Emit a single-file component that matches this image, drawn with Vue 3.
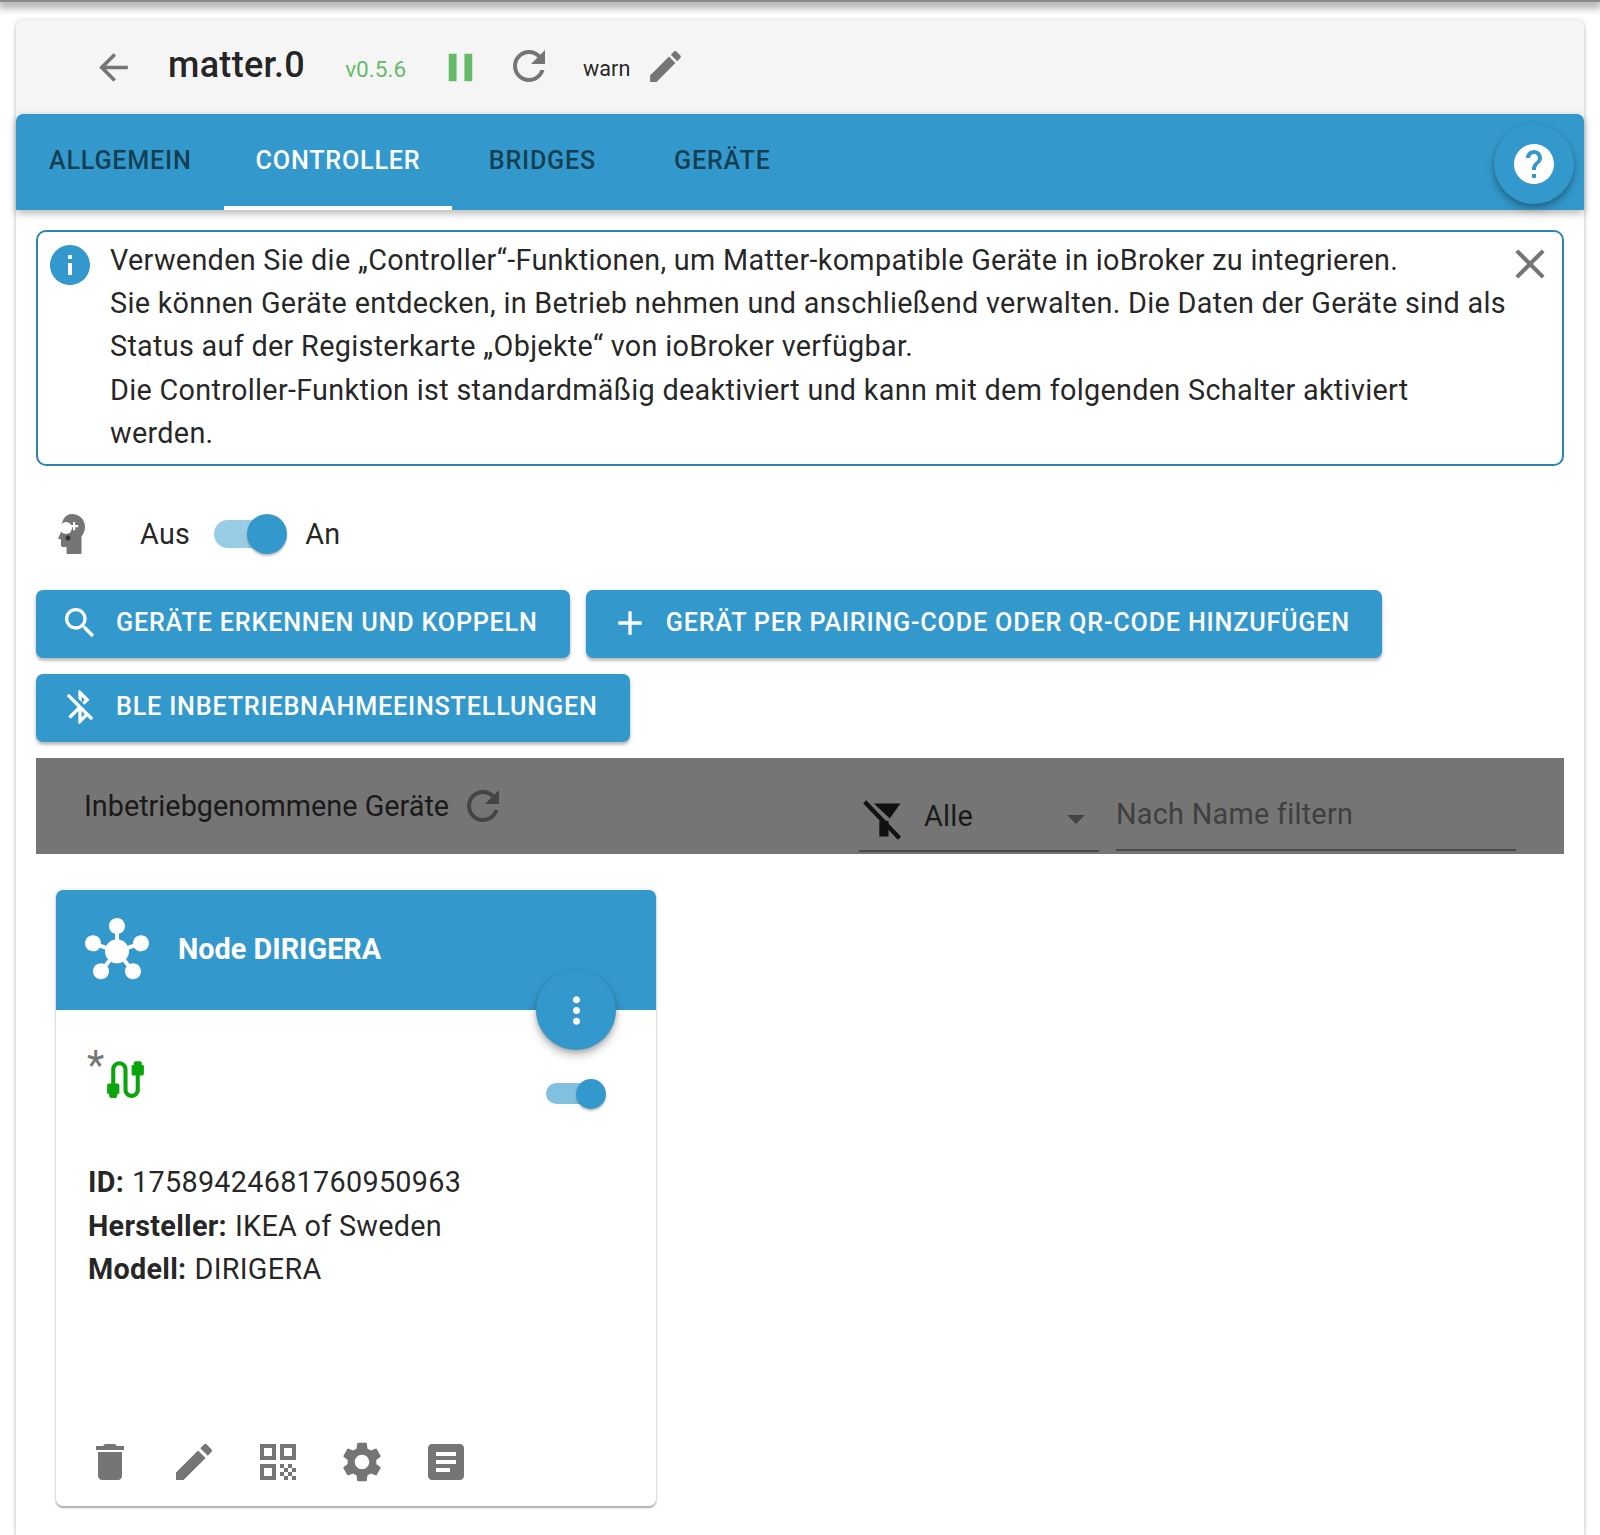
<template>
  <div class="top-bar"></div>
  <main class="panel">
    <header class="head">
      <svg class="icon back" viewBox="0 0 24 24"><path :d="icons.back" /></svg>
      <h1 class="title">matter.0</h1>
      <span class="version">v0.5.6</span>
      <svg class="icon pause" viewBox="0 0 24 24"><path :d="icons.pause" /></svg>
      <svg class="icon reload" viewBox="0 0 24 24"><path :d="icons.refresh" /></svg>
      <span class="level">warn</span>
      <svg class="icon edit" viewBox="0 0 24 24"><path :d="icons.edit" /></svg>
    </header>

    <nav class="tabs">
      <div
        v-for="tab in tabs"
        :key="tab"
        class="tab"
        :class="{ active: tab === 'Controller' }"
      >{{ tab }}</div>
      <button class="fab help-fab">
        <svg viewBox="0 0 24 24"><path :d="icons.help" /></svg>
      </button>
    </nav>

    <section class="content">
      <div class="notice">
        <svg class="notice-icon" viewBox="0 0 24 24"><path :d="icons.info" /></svg>
        <p class="notice-text">
          Verwenden Sie die „Controller“-Funktionen, um Matter-kompatible Geräte in ioBroker zu integrieren.<br />
          Sie können Geräte entdecken, in Betrieb nehmen und anschließend verwalten. Die Daten der Geräte sind als Status auf der Registerkarte „Objekte“ von ioBroker verfügbar.<br />
          Die Controller-Funktion ist standardmäßig deaktiviert und kann mit dem folgenden Schalter aktiviert werden.
        </p>
        <svg class="notice-close" viewBox="0 0 24 24"><path :d="icons.close" /></svg>
      </div>

      <div class="switch-row">
        <svg class="head-icon" viewBox="0 0 27 40">
          <path class="head-shape" d="M14 0c7.5 0 13 5.5 13 13 0 4-1.600 7-3.500 9.500V39c0 .6-.4 1-1 1H9.500c-.6 0-1-.4-1-1v-6H5c-1.200 0-2-.8-2-2v-5.500L0 24.500l3-6.500C3 7 6.500 0 14 0z" />
          <circle class="head-hole" cx="8" cy="14" r="6" />
          <path class="head-hole" d="M15 8h2.200v3h3v2.200h-3v3H15v-3h-3V11h3z" />
          <circle class="head-dot" cx="10" cy="24" r="2.500" />
        </svg>
        <span class="switch-label off">Aus</span>
        <span class="switch big"><i></i></span>
        <span class="switch-label">An</span>
      </div>

      <div class="actions">
        <button v-for="action in actions" :key="action.label" class="action">
          <svg viewBox="0 0 24 24"><path :d="action.icon" /></svg>
          {{ action.label }}
        </button>
      </div>

      <div class="devices-bar">
        <div class="devices-title">
          <span>Inbetriebgenommene Geräte</span>
          <svg class="icon" viewBox="0 0 24 24"><path :d="icons.refresh" /></svg>
        </div>
        <div class="devices-select">
          <svg class="filter-icon" viewBox="0 0 24 24">
            <path d="M7 3h14.500l-5.800 8.200L7 3z" />
            <path d="M10 12.500h5V21h-5z" />
            <path class="slash" d="M2 2l19 20" />
          </svg>
          <span class="select-value">Alle</span>
          <span class="select-arrow"></span>
        </div>
        <input class="devices-filter" placeholder="Nach Name filtern" />
      </div>

      <article class="node">
        <div class="node-head">
          <svg class="hub" viewBox="0 0 24 24"><path :d="icons.hub" /></svg>
          <span class="node-name">Node DIRIGERA</span>
          <button class="fab node-fab">
            <svg viewBox="0 0 24 24"><path :d="icons.more" /></svg>
          </button>
        </div>
        <div class="node-status">
          <div class="connection">
            <span class="star">*</span>
            <svg class="cable" viewBox="0 0 24 24"><path :d="icons.cable" /></svg>
          </div>
          <span class="switch small"><i></i></span>
        </div>
        <dl class="node-info">
          <div v-for="row in nodeInfo" :key="row.label">
            <dt>{{ row.label }}:</dt>
            <dd>{{ row.value }}</dd>
          </div>
        </dl>
        <div class="node-tools">
          <span v-for="tool in nodeTools" :key="tool" class="tool">
            <svg viewBox="0 0 24 24"><path :d="tool" /></svg>
          </span>
        </div>
      </article>
    </section>
  </main>
</template>

<script setup>
const icons = {
  back: 'M20 11H7.83l5.59-5.59L12 4l-8 8 8 8 1.41-1.41L7.83 13H20v-2z',
  pause: 'M6 19h4V5H6v14zm8-14v14h4V5h-4z',
  refresh: 'M17.65 6.35C16.2 4.9 14.21 4 12 4c-4.42 0-7.99 3.58-7.99 8s3.57 8 7.99 8c3.73 0 6.84-2.55 7.73-6h-2.08c-.82 2.33-3.04 4-5.65 4-3.31 0-6-2.69-6-6s2.69-6 6-6c1.66 0 3.14.69 4.22 1.78L13 11h7V4l-2.35 2.35z',
  edit: 'M3 17.25V21h3.75L17.81 9.94l-3.75-3.75L3 17.25zM20.71 7.04c.39-.39.39-1.02 0-1.41l-2.34-2.34a.9959.9959 0 0 0-1.41 0l-1.83 1.83 3.75 3.75 1.83-1.83z',
  help: 'M12 2C6.48 2 2 6.48 2 12s4.48 10 10 10 10-4.48 10-10S17.52 2 12 2zm1 17h-2v-2h2v2zm2.07-7.75l-.9.92C13.45 12.9 13 13.5 13 15h-2v-.5c0-1.1.45-2.1 1.17-2.83l1.24-1.26c.37-.36.59-.86.59-1.41 0-1.1-.9-2-2-2s-2 .9-2 2H8c0-2.21 1.79-4 4-4s4 1.79 4 4c0 .88-.36 1.68-.93 2.25z',
  info: 'M12 2C6.48 2 2 6.48 2 12s4.48 10 10 10 10-4.48 10-10S17.52 2 12 2zm1 15h-2v-6h2v6zm0-8h-2V7h2v2z',
  close: 'M19 6.41 17.59 5 12 10.59 6.41 5 5 6.41 10.59 12 5 17.59 6.41 19 12 13.41 17.59 19 19 17.59 13.41 12z',
  more: 'M12 8c1.1 0 2-.9 2-2s-.9-2-2-2-2 .9-2 2 .9 2 2 2zm0 2c-1.1 0-2 .9-2 2s.9 2 2 2 2-.9 2-2-.9-2-2-2zm0 6c-1.1 0-2 .9-2 2s.9 2 2 2 2-.9 2-2-.9-2-2-2z',
  hub: 'M8.4 18.2c.38.5.6 1.12.6 1.8 0 1.66-1.34 3-3 3s-3-1.34-3-3 1.34-3 3-3c.44 0 .85.09 1.23.26l1.41-1.77c-.92-1.03-1.29-2.39-1.09-3.69l-2.03-.68c-.54.83-1.46 1.38-2.52 1.38-1.66 0-3-1.34-3-3s1.34-3 3-3 3 1.34 3 3c0 .07 0 .14-.01.21l2.03.68c.64-1.21 1.82-2.09 3.22-2.32V5.91C9.96 5.57 9 4.4 9 3c0-1.66 1.34-3 3-3s3 1.34 3 3c0 1.4-.96 2.57-2.25 2.91v2.16c1.4.23 2.58 1.11 3.22 2.32l2.03-.68C18 9.64 18 9.57 18 9.5c0-1.66 1.34-3 3-3s3 1.34 3 3-1.34 3-3 3c-1.06 0-1.98-.55-2.52-1.37l-2.03.68c.2 1.29-.16 2.65-1.09 3.69l1.41 1.77c.38-.17.79-.26 1.23-.26 1.66 0 3 1.34 3 3s-1.34 3-3 3-3-1.34-3-3c0-.68.22-1.3.6-1.8l-1.41-1.77c-1.35.75-3.01.76-4.37 0L8.4 18.2z',
  cable: 'M20 5V4c0-.55-.45-1-1-1h-2c-.55 0-1 .45-1 1v1h-1v4c0 .55.45 1 1 1h1v7c0 1.1-.9 2-2 2s-2-.9-2-2V7c0-2.21-1.79-4-4-4S5 4.79 5 7v7H4c-.55 0-1 .45-1 1v4h1v1c0 .55.45 1 1 1h2c.55 0 1-.45 1-1v-1h1v-4c0-.55-.45-1-1-1H7V7c0-1.1.9-2 2-2s2 .9 2 2v10c0 2.21 1.79 4 4 4s4-1.79 4-4v-7h1c.55 0 1-.45 1-1V5h-1z',
}

const tabs = ['Allgemein', 'Controller', 'Bridges', 'Geräte']

const actions = [
  {
    label: 'Geräte erkennen und koppeln',
    icon: 'M15.5 14h-.79l-.28-.27C15.41 12.59 16 11.11 16 9.5 16 5.91 13.09 3 9.5 3S3 5.91 3 9.5 5.91 16 9.5 16c1.61 0 3.09-.59 4.23-1.57l.27.28v.79l5 4.99L20.49 19l-4.99-5zm-6 0C7.01 14 5 11.99 5 9.5S7.01 5 9.5 5 14 7.01 14 9.5 11.99 14 9.5 14z',
  },
  {
    label: 'Gerät per Pairing-Code oder QR-Code hinzufügen',
    icon: 'M19 13h-6v6h-2v-6H5v-2h6V5h2v6h6v2z',
  },
  {
    label: 'BLE Inbetriebnahmeeinstellungen',
    icon: 'M13 5.83l1.88 1.88-1.6 1.6 1.41 1.41 3.02-3.02L12 2h-1v5.03l2 2v-3.2zM5.41 4L4 5.41 10.59 12 5 17.59 6.41 19 11 14.41V22h1l4.29-4.29 2.3 2.29L20 18.59 5.41 4zM13 18.17v-3.76l1.88 1.88L13 18.17z',
  },
]

const nodeInfo = [
  { label: 'ID', value: '17589424681760950963' },
  { label: 'Hersteller', value: 'IKEA of Sweden' },
  { label: 'Modell', value: 'DIRIGERA' },
]

const nodeTools = [
  'M6 19c0 1.1.9 2 2 2h8c1.1 0 2-.9 2-2V7H6v12zM19 4h-3.5l-1-1h-5l-1 1H5v2h14V4z',
  icons.edit,
  'M3 11h8V3H3v8zm2-6h4v4H5V5zM3 21h8v-8H3v8zm2-6h4v4H5v-4zM13 3v8h8V3h-8zm6 6h-4V5h4v4zM19 19h2v2h-2zM13 13h2v2h-2zM15 15h2v2h-2zM13 17h2v2h-2zM15 19h2v2h-2zM17 17h2v2h-2zM17 13h2v2h-2zM19 15h2v2h-2z',
  'M19.14 12.94c.04-.3.06-.61.06-.94 0-.32-.02-.64-.07-.94l2.03-1.58c.18-.14.23-.41.12-.61l-1.92-3.32c-.12-.22-.37-.29-.59-.22l-2.39.96c-.5-.38-1.03-.7-1.62-.94l-.36-2.54c-.04-.24-.24-.41-.48-.41h-3.84c-.24 0-.43.17-.47.41l-.36 2.54c-.59.24-1.13.57-1.62.94l-2.39-.96c-.22-.08-.47 0-.59.22L2.74 8.87c-.12.21-.08.47.12.61l2.03 1.58c-.05.3-.09.63-.09.94s.02.64.07.94l-2.03 1.58c-.18.14-.23.41-.12.61l1.92 3.32c.12.22.37.29.59.22l2.39-.96c.5.38 1.03.7 1.62.94l.36 2.54c.05.24.24.41.48.41h3.84c.24 0 .44-.17.47-.41l.36-2.54c.59-.24 1.13-.56 1.62-.94l2.39.96c.22.08.47 0 .59-.22l1.92-3.32c.12-.22.07-.47-.12-.61l-2.01-1.58zM12 15.6c-1.98 0-3.6-1.62-3.6-3.6s1.62-3.6 3.6-3.6 3.6 1.62 3.6 3.6-1.62 3.6-3.6 3.6z',
  'M19 3H5c-1.1 0-2 .9-2 2v14c0 1.1.9 2 2 2h14c1.1 0 2-.9 2-2V5c0-1.1-.9-2-2-2zm-5 14H7v-2h7v2zm3-4H7v-2h10v2zm0-4H7V7h10v2z',
]
</script>

<style>
html, body { background: #fff; overflow: hidden; }
</style>

<style scoped>
.top-bar {
  height: 2px;
  background: #8a8a8a;
  box-shadow: 0 2px 10px 2px rgba(0, 0, 0, 0.55);
}

.panel {
  margin: 18px 16px 0;
  height: 1515px;
  background: #fff;
  border-radius: 7px 7px 0 0;
  box-shadow: 0 1px 4px rgba(0, 0, 0, 0.3);
  font-family: Roboto, "Liberation Sans", sans-serif;
  color: rgba(0, 0, 0, 0.87);
}

.icon { fill: #757575; width: 43px; height: 43px; flex: none; }

/* Header */
.head {
  height: 94px;
  background: #f5f5f5;
  border-radius: 7px 7px 0 0;
  display: flex;
  align-items: center;
  padding-left: 76px;
}
.title { margin: -4px 0 0 33px; font-size: 36px; font-weight: 500; letter-spacing: 0.3px; }
.version { margin-left: 40px; font-size: 22.6px; color: #66bb6a; position: relative; top: 2px; }
.pause { margin-left: 31px; fill: #66bb6a; width: 47px; height: 47px; }
.reload { margin-left: 21px; width: 48px; height: 48px; margin-top: -3px; }
.level { margin-left: 30px; font-size: 21.6px; position: relative; top: 1px; }
.edit { margin-left: 15px; width: 41px; height: 41px; margin-top: -2px; }

/* Tabs */
.tabs {
  position: relative;
  z-index: 1;
  height: 96px;
  display: flex;
  padding-left: 1px;
  background: #3399cc;
  border-radius: 7px 7px 0 0;
  box-shadow: 0 3px 8px rgba(0, 0, 0, 0.3);
}
.tab {
  min-width: 180px;
  padding: 0 32px 4px;
  box-sizing: border-box;
  display: flex;
  align-items: center;
  justify-content: center;
  font-size: 25.2px;
  font-weight: 500;
  letter-spacing: 0.76px;
  text-transform: uppercase;
  color: rgba(0, 0, 0, 0.6);
}
.tab.active { color: #fff; border-bottom: 4px solid #fff; padding-bottom: 0; }

.fab {
  position: absolute;
  width: 80px;
  height: 80px;
  padding: 0;
  border: 0;
  border-radius: 50%;
  background: #3399cc;
  box-shadow: 0 5px 10px rgba(0, 0, 0, 0.25), 0 2px 4px rgba(0, 0, 0, 0.15);
  display: flex;
  align-items: center;
  justify-content: center;
}
.fab svg { fill: #fff; width: 48px; height: 48px; }
.help-fab { right: 10px; top: 10px; }

/* Content */
.content { padding: 20px 20px 0; }

.notice {
  height: 236px;
  box-sizing: border-box;
  border: 2px solid #2a85b0;
  border-radius: 10px;
  display: flex;
  align-items: flex-start;
  padding: 7px 14px 0 8px;
}
.notice-icon { fill: #3399cc; width: 48px; height: 48px; flex: none; margin-top: 2px; }
.notice-text {
  margin: 0 0 0 16px;
  width: 1398px;
  flex: none;
  font-size: 28.8px;
  line-height: 43.2px;
  letter-spacing: 0.3px;
}
.notice-close { fill: #757575; width: 50px; height: 50px; flex: none; margin: 0 0 0 -3px; }

.switch-row {
  height: 124px;
  display: flex;
  align-items: center;
  padding: 12px 0 0 22px;
  box-sizing: border-box;
  font-size: 28.8px;
  letter-spacing: 0.27px;
}
.head-icon { width: 27px; height: 40px; flex: none; }
.head-shape { fill: #757575; }
.head-hole { fill: #fff; }
.head-dot { fill: #333; }
.switch-label.off { margin-left: 55px; }
.switch {
  position: relative;
  display: block;
  flex: none;
  background: rgba(51, 153, 204, 0.5);
  border-radius: 14px;
}
.switch i {
  position: absolute;
  border-radius: 50%;
  background: #3399cc;
  box-shadow: 0 2px 2px rgba(0, 0, 0, 0.25);
}
.switch.big { width: 66px; height: 28px; margin: 0 25px 0 24px; }
.switch.big i { width: 40px; height: 40px; right: -7px; top: -6px; }
.switch.small { width: 50px; height: 21px; margin-right: 10px; background: rgba(51, 153, 204, 0.62); }
.switch.small i { width: 30px; height: 30px; right: -10px; top: -4.500px; }

.actions { display: flex; flex-wrap: wrap; gap: 16px; }
.action {
  height: 68px;
  padding: 0 32px 4px 25px;
  border: 0;
  border-radius: 7px;
  background: #3399cc;
  box-shadow: 0 3px 3px rgba(0, 0, 0, 0.2), 0 1px 5px rgba(0, 0, 0, 0.12);
  color: #fff;
  display: flex;
  align-items: center;
  gap: 15px;
  font-family: inherit;
  font-size: 25.2px;
  font-weight: 500;
  letter-spacing: 0.79px;
  text-transform: uppercase;
}
.action svg { fill: #fff; width: 40px; height: 40px; margin: 2px 1px 0 -1px; }

.devices-bar {
  margin-top: 16px;
  height: 96px;
  background: #757575;
  display: flex;
  align-items: flex-start;
  padding: 0 48px;
}
.devices-title {
  display: flex;
  align-items: center;
  gap: 10px;
  width: 775px;
  margin-top: 24px;
  font-size: 28.8px;
  color: #1a1a1a;
}
.devices-title .icon { fill: #444; width: 48px; height: 48px; }
.devices-select {
  margin-top: 36px;
  width: 240px;
  height: 58px;
  box-sizing: border-box;
  border-bottom: 2px solid #4a4a4a;
  display: flex;
  align-items: center;
  padding: 0 0 12px 2px;
  font-size: 28.8px;
  color: #1a1a1a;
}
.filter-icon { width: 44px; height: 44px; fill: #111; flex: none; margin-top: 8px; }
.filter-icon .slash { fill: none; stroke: #111; stroke-width: 2.400; }
.select-value { margin-left: 19px; letter-spacing: 0.27px; }
.select-arrow {
  margin-left: 94px;
  margin-top: 6px;
  border: 9.500px solid transparent;
  border-top: 9.500px solid #444;
  border-bottom: 0;
}
.devices-filter {
  margin: 28px 0 0 17px;
  width: 400px;
  height: 65px;
  box-sizing: border-box;
  padding: 0 0 7px;
  border: 0;
  border-bottom: 2px solid #4a4a4a;
  background: transparent;
  outline: none;
  font-family: inherit;
  font-size: 28.8px;
  letter-spacing: 0.27px;
}
.devices-filter::placeholder { color: #3f3f3f; opacity: 1; }

/* Node card */
.node {
  position: relative;
  margin: 36px 0 0 20px;
  width: 600px;
  height: 616px;
  border-radius: 7px;
  background: #fff;
  box-shadow: 0 2px 2px rgba(0, 0, 0, 0.3), 0 0 4px rgba(0, 0, 0, 0.12);
}
.node-head {
  position: relative;
  height: 120px;
  background: #3399cc;
  border-radius: 7px 7px 0 0;
  display: flex;
  align-items: center;
  color: #fff;
  padding-left: 29px;
}
.hub { width: 64px; height: 64px; fill: #fff; flex: none; }
.node-name { margin: -2px 0 0 29px; font-size: 28.8px; font-weight: 700; }
.node-fab { right: 40px; bottom: -40px; }
.node-fab svg { width: 43px; height: 43px; }

.node-status {
  height: 138px;
  display: flex;
  justify-content: flex-end;
  align-items: flex-start;
  padding: 73px 50px 0 31px;
  box-sizing: border-box;
}
.connection { margin-right: auto; display: flex; position: relative; margin-top: -37px; }
.star { font-size: 40px; line-height: 40px; color: #757575; }
.cable { width: 49px; height: 49px; fill: #0aa50a; margin: 9px 0 0 -3px; }

.node-info { margin: 0; padding: 13px 32px 0; font-size: 28.8px; line-height: 43.6px; letter-spacing: 0.27px; }
.node-info div { display: flex; gap: 8px; }
.node-info dt { font-weight: 700; }
.node-info dd { margin: 0; }

.node-tools {
  position: absolute;
  left: 12px;
  bottom: 20px;
  display: flex;
}
.tool { width: 84px; display: flex; justify-content: center; }
.tool svg { width: 48px; height: 48px; fill: #757575; }
</style>
